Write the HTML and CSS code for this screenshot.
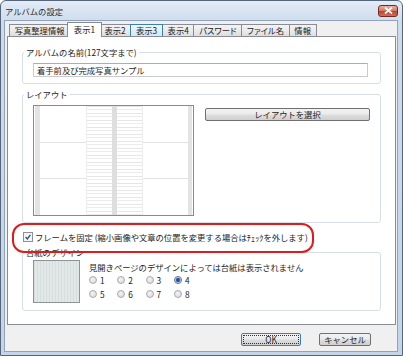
FILE: index.html
```html
<!DOCTYPE html>
<html lang="ja">
<head>
    <meta charset="UTF-8">
    <meta name="viewport" content="width=device-width, initial-scale=1.0">
    <title>アルバムの設定</title>
    <link rel="stylesheet" href="styles.css">
</head>
<body>
    <div class="window">
        <div class="titlebar">
            <span class="title">アルバムの設定</span>
            <button class="close-btn" aria-label="閉じる">
                <svg width="9" height="7" viewBox="0 0 9 7"><path d="M1 0.5L8 6.5M8 0.5L1 6.5" stroke="#fff" stroke-width="1.8"/></svg>
            </button>
        </div>

        <div class="client">
            <ul class="tabs">
                <li class="tab">写真整理情報</li>
                <li class="tab active">表示1</li>
                <li class="tab">表示2</li>
                <li class="tab hover">表示3</li>
                <li class="tab">表示4</li>
                <li class="tab">パスワード</li>
                <li class="tab">ファイル名</li>
                <li class="tab">情報</li>
            </ul>

            <div class="panel">
                <fieldset class="group">
                    <legend>アルバムの名前(127文字まで)</legend>
                    <input class="text-input" type="text" value="着手前及び完成写真サンプル">
                </fieldset>

                <fieldset class="group layout-group">
                    <legend>レイアウト</legend>
                    <div class="layout-row">
                        <div class="layout-preview">
                            <svg width="159" height="109" viewBox="0 0 159 109">
                                <defs>
                                    <pattern id="lines" width="25" height="7" patternUnits="userSpaceOnUse">
                                        <rect width="25" height="1" fill="#e6e6e6"/>
                                        <rect y="3" width="25" height="1" fill="#ececec"/>
                                    </pattern>
                                </defs>
                                <rect x="1" y="0" width="5" height="109" fill="#e3e3e3"/>
                                <rect x="154" y="0" width="4" height="109" fill="#e3e3e3"/>
                                <rect x="53" y="0" width="25" height="109" fill="url(#lines)"/>
                                <rect x="83" y="0" width="25" height="109" fill="url(#lines)"/>
                                <rect x="78" y="0" width="5" height="109" fill="#dedede"/>
                                <path d="M6 36.5H53M108 36.5H154M6 72.5H53M108 72.5H154" stroke="#e2e2e2"/>
                                <path d="M52.5 0V109M108.5 0V109" stroke="#ededed"/>
                            </svg>
                        </div>
                        <button class="btn layout-btn">レイアウトを選択</button>
                    </div>
                </fieldset>

                <label class="frame-lock">
                    <span class="checkbox">
                        <svg width="10" height="10" viewBox="0 0 10 10"><rect x="0.5" y="0.5" width="9" height="9" fill="#f3f4f6" stroke="#8e9096"/><path d="M2.6 5.1L4.3 6.9L7.4 2.8" fill="none" stroke="#3a4d7e" stroke-width="1.4"/></svg>
                    </span>
                    フレームを固定 (縮小画像や文章の位置を変更する場合はﾁｪｯｸを外します)
                </label>

                <fieldset class="group paper-group">
                    <legend>台紙のデザイン</legend>
                    <div class="paper-row">
                        <div class="paper-thumb"></div>
                        <div class="paper-options">
                            <p class="note">見開きページのデザインによっては台紙は表示されません</p>
                            <div class="radio-grid">
                                <label class="radio"><span class="dot"></span>1</label>
                                <label class="radio"><span class="dot"></span>2</label>
                                <label class="radio"><span class="dot"></span>3</label>
                                <label class="radio"><span class="dot checked"></span>4</label>
                                <label class="radio"><span class="dot"></span>5</label>
                                <label class="radio"><span class="dot"></span>6</label>
                                <label class="radio"><span class="dot"></span>7</label>
                                <label class="radio"><span class="dot"></span>8</label>
                            </div>
                        </div>
                    </div>
                </fieldset>
            </div>

            <div class="footer">
                <button class="btn ok-btn">OK</button>
                <button class="btn cancel-btn">キャンセル</button>
            </div>
        </div>
    </div>
</body>
</html>
```

FILE: styles.css
```css
* {
    box-sizing: border-box;
}

body {
    margin: 0;
    font-family: "Noto Sans CJK JP", sans-serif;
    font-size: 8.3px;
    color: #1c1c1c;
    background-color: #fff;
}

.window {
    width: 403px;
    height: 356px;
    display: flex;
    flex-direction: column;
    border: 1px solid #56667a;
    border-radius: 6px 6px 0 0;
    background: linear-gradient(#e3ecf7, #cddbec 22px, #c4d5e9);
}

.titlebar {
    height: 19px;
    display: flex;
    align-items: center;
    justify-content: space-between;
    padding: 0 4px;
}

.title {
    line-height: 12px;
    color: #2a2a2a;
}

.close-btn {
    width: 20px;
    height: 12px;
    padding: 0;
    display: flex;
    align-items: center;
    justify-content: center;
    border: 1px solid #6e2c24;
    border-radius: 3px;
    background: linear-gradient(#eab1a3, #d67a68 45%, #c2432f 55%, #d0705a);
}

.client {
    flex: 1;
    display: flex;
    flex-direction: column;
    margin: 0 4px 3px 3px;
    padding: 1px 1px 0 2px;
    border: 1px solid #8fa3ba;
    background-color: #f0f0f0;
}

/* tabs */
.tabs {
    display: flex;
    align-items: flex-end;
    height: 14px;
    margin: 0;
    padding: 0 0 0 2px;
    list-style: none;
}

.tab {
    height: 12px;
    padding: 0 4.7px;
    margin-right: -1px;
    line-height: 11px;
    white-space: nowrap;
    font-feature-settings: "palt";
    border: 1px solid #898c95;
    border-bottom: none;
    background: linear-gradient(#f3f3f3, #ebebeb 50%, #dedede);
}

.tab.hover {
    position: relative;
    z-index: 1;
    border-color: #3c7fb1;
    background: linear-gradient(#eef7fd, #e0f1fc 50%, #cbeafc);
}

.tab.active {
    position: relative;
    z-index: 2;
    height: 15px;
    margin: 0 -3px -1px -2px;
    padding: 1px 5.7px 0;
    background: #fff;
}

.panel {
    flex: 1;
    padding: 9px 14px 0;
    border: 1px solid #898c95;
    background-color: #fff;
}

/* group boxes */
.group {
    margin: 0;
    min-width: 0;
    padding: 5px 12px 6px 10px;
    border: 1px solid #d5dfe5;
    border-radius: 3px;
}

.group legend {
    margin-left: -9px;
    padding: 0 2px;
    line-height: 12px;
}

.text-input {
    display: block;
    width: 100%;
    height: 14px;
    padding: 0 3px;
    font: inherit;
    color: #1c1c1c;
    border: 1px solid #c8ccd2;
    border-top-color: #abadb3;
}

.layout-group {
    margin-top: 4px;
    padding-right: 10px;
}

.layout-row {
    display: flex;
    align-items: flex-start;
    gap: 11px;
}

.layout-preview {
    width: 161px;
    height: 111px;
    border: 1px solid #8a8a8a;
    background-color: #fff;
}

.layout-preview svg {
    display: block;
}

.btn {
    height: 13px;
    padding: 0;
    font: inherit;
    line-height: 11px;
    color: #1c1c1c;
    border: 1px solid #707070;
    border-radius: 2px;
    background: linear-gradient(#f2f2f2, #ebebeb 45%, #dddddd 55%, #cfcfcf);
}

.layout-btn {
    flex: 1;
    margin-top: 3px;
}

/* checkbox row with the red mark */
.frame-lock {
    position: relative;
    display: flex;
    align-items: center;
    gap: 2px;
    height: 12px;
    margin-top: 8px;
    padding-left: 1px;
    line-height: 12px;
}

.frame-lock::after {
    content: "";
    position: absolute;
    left: -10px;
    top: -8px;
    width: 298px;
    height: 26px;
    border: 2.5px solid #df1c1c;
    border-radius: 12px;
}

.checkbox svg {
    display: block;
}

.paper-group {
    margin-top: 3px;
    padding-top: 2px;
    padding-bottom: 7px;
}

.paper-row {
    display: flex;
    gap: 9px;
}

.paper-thumb {
    width: 47px;
    height: 43px;
    border: 1px solid #8e9494;
    background: repeating-linear-gradient(90deg, #d6dddd 0 1px, #e2e7e7 1px 3px);
}

.paper-options {
    margin-top: 1px;
}

.note {
    margin: 0;
    line-height: 12px;
}

.radio-grid {
    display: grid;
    grid-template-columns: repeat(4, 28.3px);
    grid-auto-rows: 14px;
}

.radio {
    display: flex;
    align-items: center;
    gap: 3px;
}

.dot {
    width: 8px;
    height: 8px;
    border: 1px solid #a9abad;
    border-radius: 50%;
    background: radial-gradient(circle at 40% 40%, #f4f4f4, #d4d4d4);
}

.dot.checked {
    border-color: #5a6f93;
    background: radial-gradient(circle, #2c55a4 0 1.8px, #9fb3d4 2.3px, #eef2f7 3px);
}

/* bottom buttons */
.footer {
    height: 26px;
    display: flex;
    justify-content: flex-end;
    align-items: flex-start;
    gap: 18px;
    padding: 8px 25px 0 0;
}

.ok-btn {
    width: 60px;
    border-color: #3c7fb1;
    outline: 1px dotted #333;
    outline-offset: -3px;
}

.cancel-btn {
    width: 52px;
}
```
